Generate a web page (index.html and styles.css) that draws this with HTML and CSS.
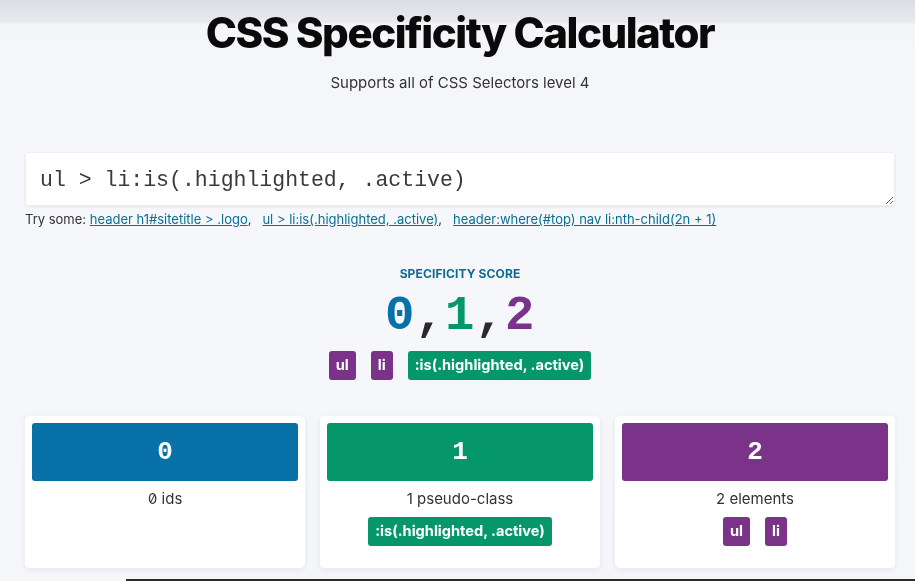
FILE: index.html
```html
<!DOCTYPE html>
<html lang="en">
<head>
<meta charset="utf-8">
<title>CSS Specificity Calculator</title>
<link rel="stylesheet" href="styles.css">
</head>
<body>
<div class="page">
  <header class="hero">
    <h1 class="title">CSS Specificity Calculator</h1>
    <p class="subtitle">Supports all of CSS Selectors level 4</p>
  </header>

  <section class="input-area">
    <textarea class="selector-input" spellcheck="false">ul &gt; li:is(.highlighted, .active)</textarea>
    <p class="examples">Try some: <a href="#">header h1#sitetitle &gt; .logo</a>,&nbsp;&nbsp; <a href="#">ul &gt; li:is(.highlighted, .active)</a>,&nbsp;&nbsp; <a href="#">header:where(#top) nav li:nth-child(2n + 1)</a></p>
  </section>

  <section class="score">
    <div class="score-label">SPECIFICITY SCORE</div>
    <div class="score-value"><span class="c-id">0</span><span class="comma">,</span><span class="c-class">1</span><span class="comma">,</span><span class="c-el">2</span></div>
    <div class="chips">
      <span class="chip chip-el">ul</span>
      <span class="chip chip-el">li</span>
      <span class="chip chip-class">:is(.highlighted, .active)</span>
    </div>
  </section>

  <section class="cards">
    <div class="card">
      <div class="card-num bg-id">0</div>
      <div class="card-label"><span class="num">0</span> ids</div>
    </div>
    <div class="card">
      <div class="card-num bg-class">1</div>
      <div class="card-label">1 pseudo-class</div>
      <div class="chips"><span class="chip chip-class">:is(.highlighted, .active)</span></div>
    </div>
    <div class="card">
      <div class="card-num bg-el">2</div>
      <div class="card-label">2 elements</div>
      <div class="chips"><span class="chip chip-el">ul</span><span class="chip chip-el">li</span></div>
    </div>
  </section>
  <div class="footer-edge"></div>
</div>
</body>
</html>
```

FILE: styles.css
```css
html, body {
  margin: 0;
  padding: 0;
}
body {
  font-family: Inter, "Noto Sans", sans-serif;
  color: #2a2a2e;
  background: linear-gradient(#dcdde2 0px, #e9eaee 22px, #f4f5f9 24px, #f6f7fb 120px, #f5f6fa 100%);
  height: 581px;
  overflow: hidden;
}
.page {
  padding: 0 20px 0 25px;
}
.hero {
  text-align: center;
}
.title {
  margin: 0;
  padding-top: 8px;
  font-size: 42px;
  line-height: 50px;
  font-weight: 800;
  letter-spacing: -0.035em;
  color: #0a0a0a;
}
.subtitle {
  margin: 15px 0 0;
  font-size: 15px;
  line-height: 20px;
  color: #333;
}
.input-area {
  margin-top: 59px;
}
.selector-input {
  display: block;
  box-sizing: border-box;
  width: 100%;
  height: 54px;
  margin: 0;
  padding: 14px 14px;
  border: 1px solid #eceef2;
  border-radius: 3px;
  background: #fff;
  box-shadow: 0 1px 3px rgba(30, 40, 60, 0.08);
  font-family: "Liberation Mono", monospace;
  font-size: 21.5px;
  line-height: 26px;
  color: #3a3a3a;
  resize: vertical;
  outline: none;
}
.examples {
  margin: 4px 0 0;
  font-size: 13px;
  line-height: 18px;
  color: #333;
}
.examples a {
  color: #0a6f93;
  text-decoration: underline;
}
.score {
  margin-top: 38px;
  text-align: center;
}
.score-label {
  font-size: 12px;
  line-height: 16px;
  font-weight: 700;
  color: #0c6c92;
  letter-spacing: 0.01em;
}
.score-value {
  margin-top: 6px;
  font-family: "Liberation Mono", monospace;
  font-weight: 700;
  font-size: 49px;
  line-height: 56px;
  letter-spacing: 0.6px;
  color: #222;
}
.c-id { color: #0872a8; }
.c-class { color: #05976a; }
.c-el { color: #7b3389; }
.comma { color: #2a2a2a; }
.chips {
  display: flex;
  justify-content: center;
  gap: 15px;
  margin-top: 7px;
}
.chip {
  display: inline-block;
  padding: 0 7px;
  height: 29px;
  line-height: 29px;
  border-radius: 3px;
  font-size: 14.6px;
  font-weight: 700;
  color: #fff;
}
.chip-el { background: #7b3389; }
.chip-class { background: #05976a; }
.cards {
  margin-top: 36px;
  display: grid;
  grid-template-columns: repeat(3, 1fr);
  gap: 15px;
}
.card {
  background: #fff;
  border-radius: 5px;
  height: 152px;
  box-sizing: border-box;
  padding: 7px;
  box-shadow: 0 2px 6px rgba(30, 40, 70, 0.07);
  text-align: center;
}
.card-num {
  height: 58px;
  line-height: 58px;
  border-radius: 3px;
  color: #fff;
  font-family: "Liberation Mono", monospace;
  font-weight: 700;
  font-size: 26px;
}
.bg-id { background: #0872a8; }
.bg-class { background: #05976a; }
.bg-el { background: #7b3389; }
.card-label {
  margin-top: 8px;
  font-size: 15px;
  line-height: 20px;
  color: #333;
}
.num {
  font-feature-settings: "zero" 1, "tnum" 1;
}
.card .chips {
  margin-top: 8px;
}
.footer-edge {
  margin: 11px -20px 0 101px;
  height: 4px;
  background: #2c2c30;
}
```
